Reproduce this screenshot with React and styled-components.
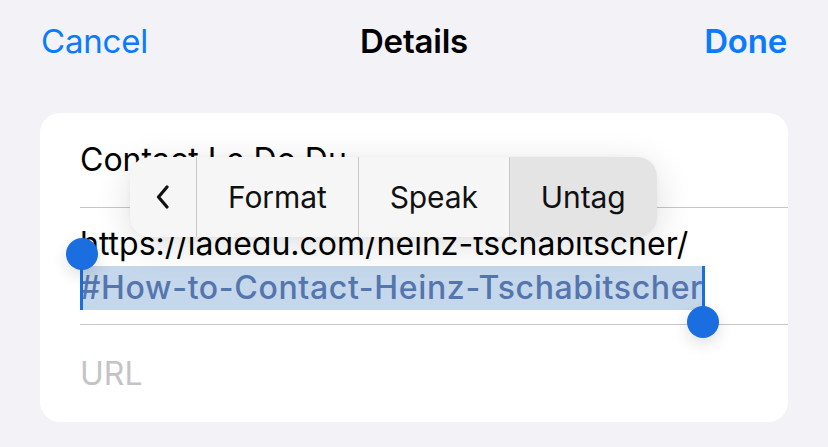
import styled, { createGlobalStyle } from 'styled-components'

const GlobalStyle = createGlobalStyle`
  html, body {
    margin: 0;
    padding: 0;
    background: #f2f2f7;
    font-family: Inter, "Noto Sans", sans-serif;
    -webkit-font-smoothing: antialiased;
  }
`

const Screen = styled.div`
  width: 828px;
  height: 447px;
  overflow: hidden;
  background: #f2f2f7;
`

const NavBar = styled.div`
  height: 82px;
  padding: 0 41px;
  display: flex;
  align-items: center;
  justify-content: space-between;
  position: relative;
  font-size: 33px;
`

const NavButton = styled.span`
  color: #0a7aff;
  font-weight: ${({ $bold }) => ($bold ? 600 : 400)};
  letter-spacing: -0.2px;
`

const NavTitle = styled.span`
  position: absolute;
  left: 0;
  right: 0;
  text-align: center;
  font-weight: 600;
  color: #000;
  letter-spacing: -0.2px;
`

const Card = styled.div`
  margin: 31px 40px 0;
  background: #fff;
  border-radius: 20px;
  position: relative;
  padding-left: 40px;
`

const Row = styled.div`
  height: ${({ $h }) => $h}px;
  display: flex;
  flex-direction: column;
  justify-content: center;
  border-bottom: ${({ $last }) => ($last ? 'none' : '1px solid #c6c6c8')};
  box-sizing: border-box;
  font-size: 32px;
  color: ${({ $placeholder }) => ($placeholder ? '#c4c4c7' : '#000')};
`

const Line = styled.div`
  height: 44px;
  line-height: 44px;
  white-space: nowrap;
`

const Selection = styled.span`
  position: relative;
  display: inline-block;
  background: #c5d7eb;
  color: #5475ad;
  font-weight: 500;
  letter-spacing: 0.65px;
`

const Stem = styled.span`
  position: absolute;
  width: 3px;
  background: #1a6ee0;
  ${({ $side }) =>
    $side === 'start'
      ? 'left: 0; top: -12px; bottom: 0;'
      : 'right: -2px; top: 0; bottom: -12px;'}
`

const Knob = styled.span`
  position: absolute;
  width: 32px;
  height: 32px;
  border-radius: 50%;
  background: #1a6ee0;
  box-shadow: 0 6px 16px rgba(0, 0, 0, 0.12);
  ${({ $side }) =>
    $side === 'start'
      ? 'left: -14px; top: -28px;'
      : 'right: -16px; bottom: -28px;'}
`

const Menu = styled.div`
  position: absolute;
  left: 90px;
  top: 44px;
  height: 80px;
  display: flex;
  border-radius: 20px;
  overflow: hidden;
  background: #f6f6f6;
  box-shadow: 0 8px 36px rgba(0, 0, 0, 0.13), 0 0 4px rgba(0, 0, 0, 0.03);
`

const MenuItem = styled.div`
  display: flex;
  align-items: center;
  padding: 0 ${({ $pad }) => $pad}px;
  font-size: 30px;
  color: #111;
  letter-spacing: -0.1px;
  background: ${({ $active }) => ($active ? '#e4e4e5' : 'transparent')};
  border-left: ${({ $first }) => ($first ? 'none' : '1px solid #c8c8ca')};
`

const Chevron = () => (
  <svg width="14" height="24" viewBox="0 0 14 24">
    <path d="M11 2 L2.5 12 L11 22" fill="none" stroke="#111" strokeWidth="3.2" strokeLinecap="round" strokeLinejoin="round" />
  </svg>
)

export default function App() {
  return (
    <Screen>
      <GlobalStyle />
      <NavBar>
        <NavButton>Cancel</NavButton>
        <NavTitle>Details</NavTitle>
        <NavButton $bold>Done</NavButton>
      </NavBar>
      <Card>
        <Row $h={95}>
          <Line>Contact Le Do Du</Line>
        </Row>
        <Row $h={117}>
          <Line>https://ladedu.com/heinz-tschabitscher/</Line>
          <Line>
            <Selection>
              <Stem $side="start" />
              <Knob $side="start" />
              #How-to-Contact-Heinz-Tschabitscher
              <Stem $side="end" />
              <Knob $side="end" />
            </Selection>
          </Line>
        </Row>
        <Row $h={97} $placeholder $last>
          <Line>URL</Line>
        </Row>
        <Menu>
          <MenuItem $first $pad={26}>
            <Chevron />
          </MenuItem>
          <MenuItem $pad={31}>Format</MenuItem>
          <MenuItem $pad={31}>Speak</MenuItem>
          <MenuItem $pad={31} $active>Untag</MenuItem>
        </Menu>
      </Card>
    </Screen>
  )
}
